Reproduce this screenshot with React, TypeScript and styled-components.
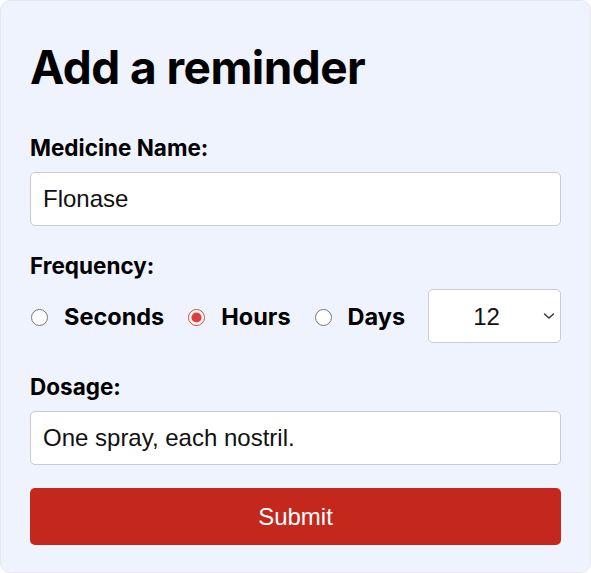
import styled, { createGlobalStyle } from "styled-components"

const GlobalStyle = createGlobalStyle`
  html, body {
    margin: 0;
    padding: 0;
    background: #ffffff;
  }
`

const Card = styled.form`
  box-sizing: border-box;
  width: 591px;
  height: 573px;
  padding: 30px 29px 0 29px;
  background: #eff3fd;
  border: 1px solid #e6e8ee;
  border-radius: 10px;
  font-family: Inter, "Noto Sans", sans-serif;
  color: #000;
  display: flex;
  flex-direction: column;
`

const Title = styled.h1`
  margin: 6px 0 0 0;
  font-size: 46px;
  font-weight: 700;
  letter-spacing: -0.55px;
  line-height: 60px;
`

const Label = styled.label<{ $top: number }>`
  display: block;
  margin-top: ${(p) => p.$top}px;
  font-size: 22.5px;
  font-weight: 700;
  line-height: 24px;
`

const TextInput = styled.input`
  box-sizing: border-box;
  width: 100%;
  height: 54px;
  margin-top: 12px;
  padding: 0 12px;
  border: 1px solid #c9cbd1;
  border-radius: 5px;
  background: #fff;
  font-family: "Liberation Sans", Arial, sans-serif;
  font-size: 24px;
  color: #111;
  outline: none;
`

const RadioRow = styled.div`
  display: flex;
  align-items: center;
  margin-top: 11px;
`

const Option = styled.label`
  display: flex;
  align-items: center;
  margin-right: 23px;
  font-size: 23.5px;
  font-weight: 700;
  cursor: pointer;
`

const Radio = styled.input`
  width: 17px;
  height: 17px;
  margin: 2px 16px 0 1px;
  accent-color: #d9403a;
`

const SelectWrap = styled.div`
  position: relative;
  width: 137px;
  height: 54px;
  margin-left: auto;
`

const Select = styled.select`
  box-sizing: border-box;
  width: 100%;
  height: 100%;
  appearance: none;
  padding: 0 16px 0 0;
  border: 1px solid #c9cbd1;
  border-radius: 5px;
  background: #fff;
  font-family: "Liberation Sans", Arial, sans-serif;
  font-size: 24px;
  color: #111;
  text-align: center;
  text-align-last: center;
  outline: none;
`

const Chevron = styled.svg`
  position: absolute;
  right: 6px;
  top: 22px;
  width: 12px;
  height: 10px;
  pointer-events: none;
`

const SubmitButton = styled.button`
  height: 57px;
  margin-top: 23px;
  border: none;
  border-radius: 5px;
  background: #c4271c;
  color: #fff;
  font-family: "Liberation Sans", Arial, sans-serif;
  font-size: 24px;
  cursor: pointer;
`

export default function App() {
  return (
    <>
      <GlobalStyle />
      <Card onSubmit={(e) => e.preventDefault()}>
        <Title>Add a reminder</Title>
        <Label $top={39} htmlFor="med">
          Medicine Name:
        </Label>
        <TextInput id="med" defaultValue="Flonase" />
        <Label $top={28}>Frequency:</Label>
        <RadioRow>
          <Option>
            <Radio type="radio" name="freq" value="seconds" />
            Seconds
          </Option>
          <Option>
            <Radio type="radio" name="freq" value="hours" defaultChecked />
            Hours
          </Option>
          <Option>
            <Radio type="radio" name="freq" value="days" />
            Days
          </Option>
          <SelectWrap>
            <Select defaultValue="12">
              {Array.from({ length: 24 }, (_, i) => (
                <option key={i} value={String(i + 1)}>
                  {i + 1}
                </option>
              ))}
            </Select>
            <Chevron viewBox="0 0 12 10">
              <polyline
                points="1.5,3 6,7 10.5,3"
                fill="none"
                stroke="#333"
                strokeWidth="1.4"
                strokeLinecap="round"
                strokeLinejoin="round"
              />
            </Chevron>
          </SelectWrap>
        </RadioRow>
        <Label $top={32} htmlFor="dose">
          Dosage:
        </Label>
        <TextInput id="dose" defaultValue="One spray, each nostril." />
        <SubmitButton type="submit">Submit</SubmitButton>
      </Card>
    </>
  )
}
